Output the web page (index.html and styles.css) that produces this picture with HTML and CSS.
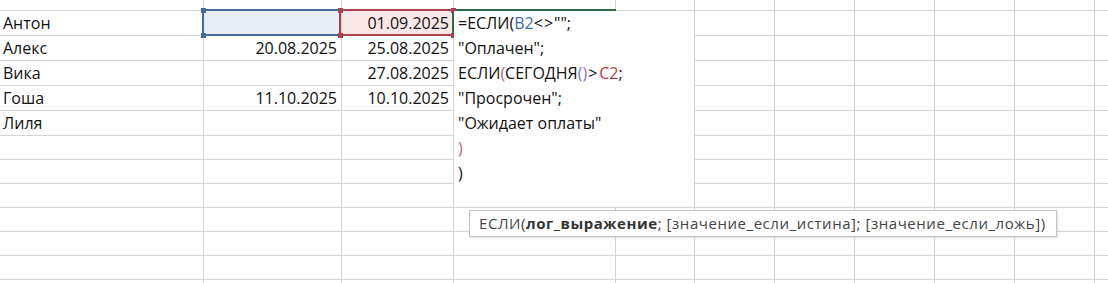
FILE: index.html
```html
<!DOCTYPE html>
<html lang="ru">
<head>
<meta charset="utf-8">
<title>Excel — ЕСЛИ</title>
<link rel="stylesheet" href="styles.css">
</head>
<body>
<div class="sheet">
  <div class="grid">
    <div class="c"></div><div class="c"></div><div class="c"></div><div class="c"></div><div class="c"></div><div class="c"></div><div class="c"></div><div class="c"></div><div class="c"></div><div class="c"></div><div class="c"></div>

    <div class="c name">Антон</div><div class="c num sel-b"></div><div class="c num sel-c">01.09.2025</div><div class="c"></div><div class="c"></div><div class="c"></div><div class="c"></div><div class="c"></div><div class="c"></div><div class="c"></div><div class="c"></div>

    <div class="c name">Алекс</div><div class="c num">20.08.2025</div><div class="c num">25.08.2025</div><div class="c"></div><div class="c"></div><div class="c"></div><div class="c"></div><div class="c"></div><div class="c"></div><div class="c"></div><div class="c"></div>

    <div class="c name">Вика</div><div class="c num"></div><div class="c num">27.08.2025</div><div class="c"></div><div class="c"></div><div class="c"></div><div class="c"></div><div class="c"></div><div class="c"></div><div class="c"></div><div class="c"></div>

    <div class="c name">Гоша</div><div class="c num">11.10.2025</div><div class="c num">10.10.2025</div><div class="c"></div><div class="c"></div><div class="c"></div><div class="c"></div><div class="c"></div><div class="c"></div><div class="c"></div><div class="c"></div>

    <div class="c name">Лиля</div><div class="c"></div><div class="c"></div><div class="c"></div><div class="c"></div><div class="c"></div><div class="c"></div><div class="c"></div><div class="c"></div><div class="c"></div><div class="c"></div>

    <div class="c"></div><div class="c"></div><div class="c"></div><div class="c"></div><div class="c"></div><div class="c"></div><div class="c"></div><div class="c"></div><div class="c"></div><div class="c"></div><div class="c"></div>
    <div class="c"></div><div class="c"></div><div class="c"></div><div class="c"></div><div class="c"></div><div class="c"></div><div class="c"></div><div class="c"></div><div class="c"></div><div class="c"></div><div class="c"></div>
    <div class="c"></div><div class="c"></div><div class="c"></div><div class="c"></div><div class="c"></div><div class="c"></div><div class="c"></div><div class="c"></div><div class="c"></div><div class="c"></div><div class="c"></div>
    <div class="c"></div><div class="c"></div><div class="c"></div><div class="c"></div><div class="c"></div><div class="c"></div><div class="c"></div><div class="c"></div><div class="c"></div><div class="c"></div><div class="c"></div>
    <div class="c"></div><div class="c"></div><div class="c"></div><div class="c"></div><div class="c"></div><div class="c"></div><div class="c"></div><div class="c"></div><div class="c"></div><div class="c"></div><div class="c"></div>
    <div class="c"></div><div class="c"></div><div class="c"></div><div class="c"></div><div class="c"></div><div class="c"></div><div class="c"></div><div class="c"></div><div class="c"></div><div class="c"></div><div class="c"></div>
    <div class="c"></div><div class="c"></div><div class="c"></div><div class="c"></div><div class="c"></div><div class="c"></div><div class="c"></div><div class="c"></div><div class="c"></div><div class="c"></div><div class="c"></div>
  </div>

  <div class="ref ref-b"></div>
  <div class="ref ref-c"></div>
  <div class="active"></div>
  <span class="h h-blue h1"></span>
  <span class="h h-blue h2"></span>
  <span class="h h-red h3"></span>
  <span class="h h-red h4"></span>
  <span class="h h-red h5"></span>
  <span class="h h-red h6"></span>

  <div class="editor">
    <div class="ln">=ЕСЛИ(<span class="rb">B2</span><span class="op">&lt;&gt;</span>"";</div>
    <div class="ln">"Оплачен";</div>
    <div class="ln">ЕСЛИ<span class="p1">(</span>СЕГОДНЯ<span class="p2">()</span><span class="gt">&gt;</span><span class="rc">C2</span>;</div>
    <div class="ln">"Просрочен";</div>
    <div class="ln">"Ожидает оплаты"</div>
    <div class="ln"><span class="p1">)</span></div>
    <div class="ln">)</div>
  </div>

  <div class="tip">ЕСЛИ(<b>лог_выражение</b>; [значение_если_истина]; [значение_если_ложь])</div>
</div>
</body>
</html>
```

FILE: styles.css
```css
html, body {
  margin: 0;
  padding: 0;
  background: #ffffff;
}

body {
  width: 1108px;
  height: 283px;
  overflow: hidden;
}

.sheet {
  position: relative;
  width: 1108px;
  height: 283px;
  overflow: hidden;
  font-family: "Open Sans", "Liberation Sans", sans-serif;
  font-size: 16px;
  color: #111111;
}

.grid {
  display: grid;
  grid-template-columns: 204px 138px 112px 162px 79px 80px 80px 80px 80px 80px 40px;
  grid-template-rows: 11px repeat(5, 25px) repeat(6, 24px) 30px;
}

.c {
  box-sizing: border-box;
  border-right: 1px solid #d4d4d4;
  border-bottom: 1px solid #d4d4d4;
  line-height: 25px;
  white-space: nowrap;
  overflow: hidden;
}

.name {
  padding-left: 3px;
}

.num {
  text-align: right;
  padding-right: 4px;
}

.sel-b {
  background: #e8eef8;
}

.sel-c {
  background: #fbe7e8;
}

/* reference highlight boxes */
.ref {
  position: absolute;
  top: 9px;
  height: 27px;
  box-sizing: border-box;
  border: 2px solid;
}

.ref-b {
  left: 202px;
  width: 139px;
  border-color: #46699c;
}

.ref-c {
  left: 339px;
  width: 115px;
  border-color: #a8434f;
}

.active {
  position: absolute;
  left: 452px;
  top: 9px;
  width: 164px;
  height: 27px;
  box-sizing: border-box;
  border-top: 2px solid #2f6b45;
  border-left: 2px solid #2f6b45;
}

.h {
  position: absolute;
  width: 5px;
  height: 5px;
}

.h-blue { background: #46699c; }
.h-red { background: #a8434f; }

.h1 { left: 201px; top: 8px; }
.h2 { left: 201px; top: 33px; }
.h3 { left: 338px; top: 8px; }
.h4 { left: 338px; top: 33px; }
.h5 { left: 451px; top: 8px; }
.h6 { left: 451px; top: 33px; }

/* in-cell formula editor */
.editor {
  position: absolute;
  left: 454px;
  top: 11px;
  width: 240px;
  height: 196px;
  box-sizing: border-box;
  background: #ffffff;
  padding-left: 4px;
}

.ln {
  height: 25px;
  line-height: 25px;
  white-space: nowrap;
}

.rb { color: #3d6bab; }
.rc { color: #b0404c; }
.p1 { color: #c2606c; }
.p2 { color: #8e6cc0; }
.op { letter-spacing: 1px; }
.gt { padding: 0 2px 0 1px; }

/* function tooltip */
.tip {
  position: absolute;
  left: 469px;
  top: 210px;
  width: 588px;
  height: 27px;
  box-sizing: border-box;
  padding-left: 9px;
  background: #ffffff;
  border: 1px solid #c4c4c4;
  box-shadow: 1px 1px 2px rgba(0, 0, 0, 0.12);
  font-family: "Open Sans", "Noto Sans", sans-serif;
  font-size: 15px;
  letter-spacing: 0.55px;
  line-height: 24px;
  color: #444444;
  white-space: nowrap;
}

.tip b {
  font-weight: 700;
  color: #333333;
}
```
